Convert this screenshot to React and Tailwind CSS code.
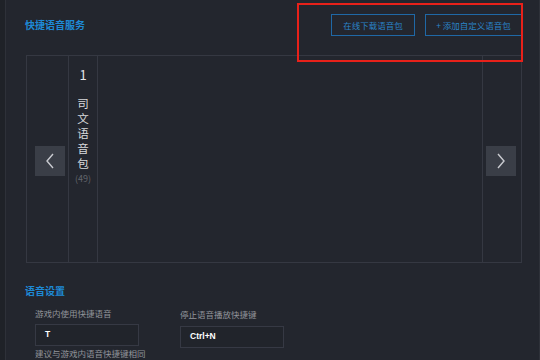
import React from 'react';

const font = { fontFamily: '"Noto Sans CJK SC", "Noto Sans", sans-serif' };

function ArrowButton({ dir }) {
  return (
    <div className="w-[30px] h-[30px] bg-[#3a3e47] flex items-center justify-center">
      <svg width="12" height="18" viewBox="0 0 12 18" fill="none" stroke="#c9cbd0" strokeWidth="1.4">
        {dir === 'left' ? <path d="M9 2 L3 9 L9 16" /> : <path d="M3 2 L9 9 L3 16" />}
      </svg>
    </div>
  );
}

export default function App() {
  return (
    <div className="w-[540px] h-[360px] bg-[#23262e] flex overflow-hidden relative" style={font}>
      {/* left strip */}
      <div className="w-[6px] bg-[#1f2228] border-r border-[#2e3139]" />

      <div className="flex-1 pl-[19px] pr-[17px] border-r border-[#2e3139]">
        {/* Header */}
        <div className="flex items-center justify-between pt-[14px]">
          <h2 className="text-[10px] font-bold text-[#1e8ad6] leading-none">快捷语音服务</h2>
          <div className="flex gap-[10px]">
            <button className="h-[22px] w-[84px] border border-[#1f68a6] text-[#2a84c8] text-[8.5px] leading-none">
              在线下载语音包
            </button>
            <button className="h-[22px] w-[97px] border border-[#1f68a6] text-[#2a84c8] text-[8.5px] leading-none">
              + 添加自定义语音包
            </button>
          </div>
        </div>

        {/* Carousel */}
        <div className="mt-[19px] ml-[1px] h-[208px] border border-[#353842] flex">
          <div className="w-[42px] border-r border-[#353842] flex items-center pl-[8px]">
            <div className="mt-[4px]">
              <ArrowButton dir="left" />
            </div>
          </div>
          <div className="w-[29px] border-r border-[#353842] flex flex-col items-center pt-[12px]">
            <span className="text-[13px] text-[#e4e5e8] leading-none">1</span>
            <div className="mt-[15px] flex flex-col items-center text-[11.5px] text-[#d8d9dc] leading-[15px]">
              <span>司</span>
              <span>文</span>
              <span>语</span>
              <span>音</span>
              <span>包</span>
            </div>
            <span className="mt-[3px] text-[9px] text-[#62656c] leading-none">(49)</span>
          </div>
          <div className="flex-1" />
          <div className="w-[39px] border-l border-[#353842] flex items-center pl-[3px]">
            <div className="mt-[4px]">
              <ArrowButton dir="right" />
            </div>
          </div>
        </div>

        {/* Voice settings */}
        <h2 className="mt-[23px] text-[10px] font-bold text-[#1e8ad6] leading-none">语音设置</h2>
        <div className="flex pl-[10px] mt-[13px]">
          <div className="w-[145px] flex flex-col">
            <span className="text-[8.5px] text-[#92959b] leading-none">游戏内使用快捷语音</span>
            <div className="mt-[6px] w-[104px] h-[22px] border border-[#363944] bg-[#21242b] flex items-center pl-[9px]">
              <span className="text-[8.5px] font-bold text-white" style={{ fontFamily: '"Liberation Sans", Arial, sans-serif' }}>T</span>
            </div>
            <span className="mt-[3px] text-[8.5px] text-[#92959b] leading-none whitespace-nowrap">建议与游戏内语音快捷键相同</span>
          </div>
          <div className="flex flex-col pt-[1px]">
            <span className="text-[8.5px] text-[#92959b] leading-none">停止语音播放快捷键</span>
            <div className="mt-[7px] w-[104px] h-[22px] border border-[#363944] bg-[#21242b] flex items-center pl-[9px]">
              <span className="text-[8.5px] font-bold text-white" style={{ fontFamily: '"Liberation Sans", Arial, sans-serif' }}>Ctrl+N</span>
            </div>
          </div>
        </div>
      </div>

      {/* red annotation box */}
      <div className="absolute left-[297px] top-[3px] w-[226px] h-[59px] border-2 border-[#e8211a]" />
    </div>
  );
}
